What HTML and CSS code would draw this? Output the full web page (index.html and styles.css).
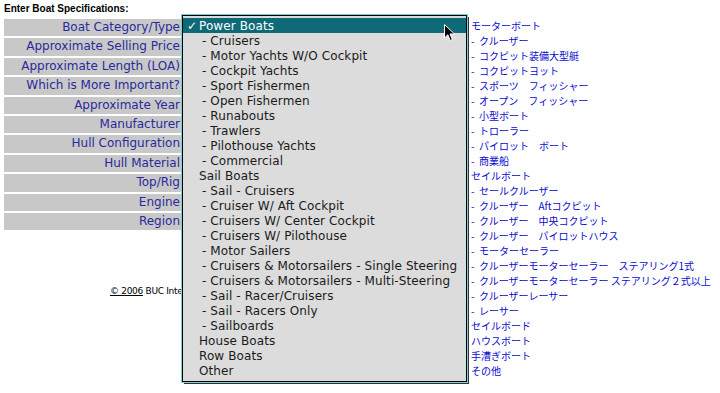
FILE: index.html
```html
<!DOCTYPE html>
<html>
<head>
<meta charset="utf-8">
<link rel="stylesheet" href="styles.css">
</head>
<body>
<div class="page">
  <div class="heading">Enter Boat Specifications:</div>
  <div class="main">
    <div class="form">
      <div class="rows">
        <div class="row"><span class="label">Boat Category/Type</span><span class="field"></span></div>
        <div class="row"><span class="label">Approximate Selling Price</span><span class="field"></span></div>
        <div class="row"><span class="label">Approximate Length (LOA)</span><span class="field"></span></div>
        <div class="row"><span class="label">Which is More Important?</span><span class="field"></span></div>
        <div class="row"><span class="label">Approximate Year</span><span class="field"></span></div>
        <div class="row"><span class="label">Manufacturer</span><span class="field"></span></div>
        <div class="row"><span class="label">Hull Configuration</span><span class="field"></span></div>
        <div class="row"><span class="label">Hull Material</span><span class="field"></span></div>
        <div class="row"><span class="label">Top/Rig</span><span class="field"></span></div>
        <div class="row"><span class="label">Engine</span><span class="field"></span></div>
        <div class="row"><span class="label">Region</span><span class="field"></span></div>
      </div>
      <div class="copyright"><u>© 2006</u> BUC International Corp.</div>
    </div>
    <ul class="jp">
      <li>モーターボート</li>
      <li>-&nbsp; クルーザー</li>
      <li>-&nbsp; コクピット装備大型艇</li>
      <li>-&nbsp; コクピットヨット</li>
      <li>-&nbsp; スポーツ　フィッシャー</li>
      <li>-&nbsp; オープン　フィッシャー</li>
      <li>-&nbsp; 小型ボート</li>
      <li>-&nbsp; トローラー</li>
      <li>-&nbsp; パイロット　ボート</li>
      <li>-&nbsp; 商業船</li>
      <li>セイルボート</li>
      <li>-&nbsp; セールクルーザー</li>
      <li>-&nbsp; クルーザー　Aftコクピット</li>
      <li>-&nbsp; クルーザー　中央コクピット</li>
      <li>-&nbsp; クルーザー　パイロットハウス</li>
      <li>-&nbsp; モーターセーラー</li>
      <li>-&nbsp; クルーザーモーターセーラー　ステアリング1式</li>
      <li>-&nbsp; クルーザーモーターセーラー ステアリング２式以上</li>
      <li>-&nbsp; クルーザーレーサー</li>
      <li>-&nbsp; レーサー</li>
      <li>セイルボード</li>
      <li>ハウスボート</li>
      <li>手漕ぎボート</li>
      <li>その他</li>
    </ul>
  </div>
</div>

<div class="popup">
  <ul class="menu">
    <li class="item top selected"><span class="check">✓</span>Power Boats</li>
    <li class="item sub">- Cruisers</li>
    <li class="item sub">- Motor Yachts W/O Cockpit</li>
    <li class="item sub">- Cockpit Yachts</li>
    <li class="item sub">- Sport Fishermen</li>
    <li class="item sub">- Open Fishermen</li>
    <li class="item sub">- Runabouts</li>
    <li class="item sub">- Trawlers</li>
    <li class="item sub">- Pilothouse Yachts</li>
    <li class="item sub">- Commercial</li>
    <li class="item top">Sail Boats</li>
    <li class="item sub">- Sail - Cruisers</li>
    <li class="item sub">- Cruiser W/ Aft Cockpit</li>
    <li class="item sub">- Cruisers W/ Center Cockpit</li>
    <li class="item sub">- Cruisers W/ Pilothouse</li>
    <li class="item sub">- Motor Sailers</li>
    <li class="item sub">- Cruisers &amp; Motorsailers - Single Steering</li>
    <li class="item sub">- Cruisers &amp; Motorsailers - Multi-Steering</li>
    <li class="item sub">- Sail - Racer/Cruisers</li>
    <li class="item sub">- Sail - Racers Only</li>
    <li class="item sub">- Sailboards</li>
    <li class="item top">House Boats</li>
    <li class="item top">Row Boats</li>
    <li class="item top">Other</li>
  </ul>
  <svg class="cursor" width="12" height="18" viewBox="0 0 12 18"><path d="M0.5 0.5 L0.5 14 L3.8 10.8 L6.2 16.5 L8.4 15.5 L6 10 L10.5 10 Z" fill="#000" stroke="#fff" stroke-width="1"/></svg>
</div>
</body>
</html>
```

FILE: styles.css
```css
html, body {
  margin: 0;
  padding: 0;
  background: #fff;
}
.page {
  padding: 3px 4px 0 4px;
  font-family: "DejaVu Sans", Verdana, sans-serif;
}
.heading {
  font-family: "Liberation Sans", Arial, sans-serif;
  font-weight: bold;
  font-size: 10px;
  color: #000;
  height: 12px;
  line-height: 12px;
  margin-bottom: -1px;
}
.main {
  display: flex;
  align-items: flex-start;
}
.form {
  width: 463px;
  flex: none;
}
.rows {
  display: flex;
  flex-direction: column;
  gap: 2px;
  padding-top: 5px;
}
.row {
  display: flex;
  height: 17.4px;
}
.label {
  width: 177px;
  background: #c8c8c8;
  color: #2a2a9c;
  font-size: 12px;
  line-height: 17.4px;
  text-align: right;
  white-space: nowrap;
  padding-right: 1px;
  box-sizing: border-box;
}
.field {
  flex: 1;
}
.copyright {
  margin-top: 56px;
  padding-left: 106px;
  font-size: 9px;
  color: #000;
  letter-spacing: -0.3px;
}
.jp {
  list-style: none;
  margin: 0;
  padding: 0;
  padding-top: 4px;
  margin-left: 4px;
  font-family: "Noto Sans CJK JP", sans-serif;
  font-size: 10px;
  line-height: 15px;
  color: #0a0ad0;
  white-space: nowrap;
}
.popup {
  position: absolute;
  left: 182px;
  top: 15px;
  width: 283px;
  height: 363px;
  background: #dcdcdc;
  border: 1px solid #000;
  outline: 1px solid #7ecfd8;
  box-shadow: 2px 2px 0 #333;
  padding-top: 2px;
}
.menu {
  list-style: none;
  margin: 0;
  padding: 0;
  font-family: "DejaVu Sans", sans-serif;
  font-size: 12px;
  color: #1a1a1a;
}
.item {
  height: 15px;
  line-height: 16px;
  white-space: nowrap;
  letter-spacing: 0.1px;
}
.item.top {
  padding-left: 16px;
}
.item.sub {
  padding-left: 19px;
}
.item.selected {
  background: #0e6a77;
  color: #fff;
  position: relative;
}
.check {
  position: absolute;
  left: 4px;
  top: 0;
}
.cursor {
  position: absolute;
  left: 261px;
  top: 8px;
}
```
